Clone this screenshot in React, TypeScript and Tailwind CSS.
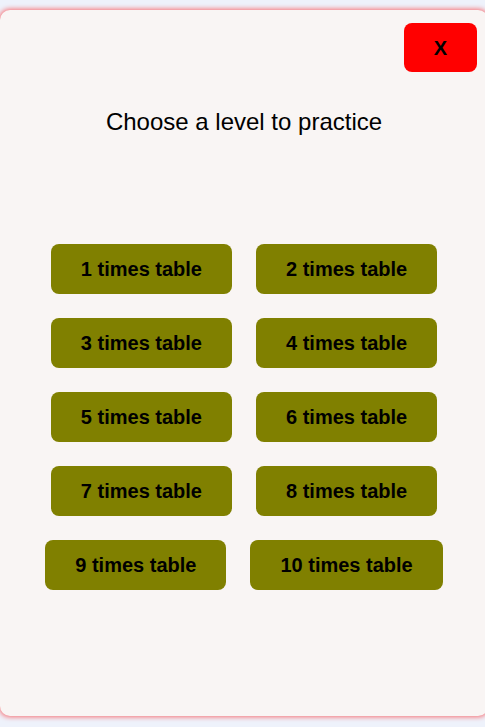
const levels = [1, 2, 3, 4, 5, 6, 7, 8, 9, 10];

export default function App() {
  return (
    <div className="min-h-screen overflow-hidden bg-[#eef2fb] pt-[10px] font-['Liberation_Sans',Arial,sans-serif] text-black">
      <div className="flex h-[706px] w-[488px] flex-col rounded-[10px] bg-[#f9f5f4] pt-[13px] shadow-[0_0_5px_1px_rgba(255,0,0,0.55)]">
        <div className="flex justify-end pr-[11px]">
          <button className="h-[49px] w-[73px] rounded-[8px] bg-[#ff0000] text-[20px] font-bold">
            X
          </button>
        </div>

        <h1 className="mt-[36px] text-center text-[24px] leading-[28px]">
          Choose a level to practice
        </h1>

        <div className="mt-[108px] flex flex-wrap justify-center gap-6 px-4">
          {levels.map((n) => (
            <button
              key={n}
              className="flex h-[50px] items-center rounded-[8px] bg-[#808000] px-[30px] text-[20px] font-bold"
            >
              {n} times table
            </button>
          ))}
        </div>
      </div>
    </div>
  );
}
